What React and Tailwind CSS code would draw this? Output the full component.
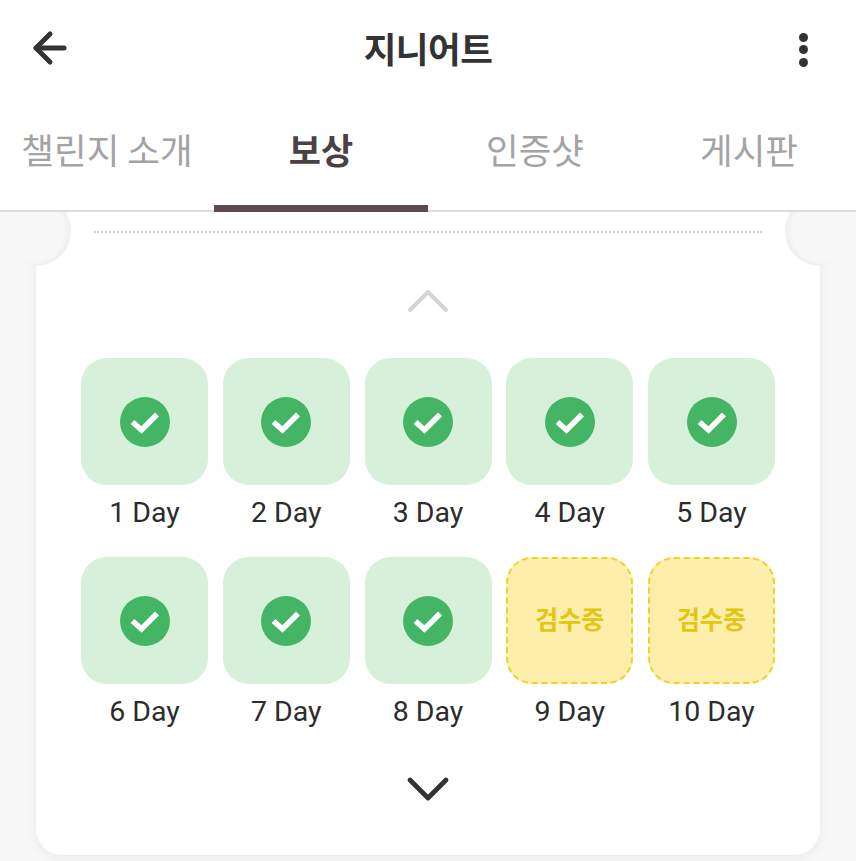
import React from 'react';
import { ArrowLeft, ChevronUp, ChevronDown } from 'lucide-react';

const KR = "font-['Noto_Sans_CJK_KR','Noto_Sans',sans-serif]";

const TABS = [
  { label: '챌린지 소개' },
  { label: '보상', active: true },
  { label: '인증샷' },
  { label: '게시판' },
];

const DAYS = [
  { day: 1, done: true },
  { day: 2, done: true },
  { day: 3, done: true },
  { day: 4, done: true },
  { day: 5, done: true },
  { day: 6, done: true },
  { day: 7, done: true },
  { day: 8, done: true },
  { day: 9, done: false },
  { day: 10, done: false },
];

const CheckBadge = () => (
  <svg width="50" height="50" viewBox="0 0 50 50">
    <circle cx="25" cy="25" r="25" fill="#43b565" />
    <path d="M12.5 25 L21.5 33 L37 17.5" fill="none" stroke="#fff" strokeWidth="5.5" />
  </svg>
);

const DayTile = ({ day, done }) => (
  <div className="flex flex-col items-center">
    {done ? (
      <div className="flex h-[127px] w-full items-center justify-center rounded-[26px] bg-[#d6f0d9]">
        <CheckBadge />
      </div>
    ) : (
      <div className="flex h-[127px] w-full items-center justify-center rounded-[26px] border-2 border-dashed border-[#e6d62c] bg-[#fdeeab] pb-[3px]">
        <span className={`${KR} text-[25px] font-bold text-[#e3c60f]`}>검수중</span>
      </div>
    )}
    <span className="mt-[10px] font-['Roboto',sans-serif] text-[28.5px] leading-[36px] text-[#2c2c2c]">
      {day} Day
    </span>
  </div>
);

export default function App() {
  return (
    <div className={`${KR} flex h-[861px] w-[856px] flex-col overflow-hidden bg-[#f7f7f7]`}>
      <header className="grid h-[96px] grid-cols-[1fr_auto_1fr] items-center bg-white px-[26px]">
        <ArrowLeft size={48} strokeWidth={2.5} color="#333" />
        <h1 className="text-[35.5px] font-bold tracking-[-0.5px] text-[#333]">지니어트</h1>
        <div className="flex flex-col items-end gap-[3.5px] pr-[22px] pt-[3px]">
          <span className="h-[9px] w-[9px] rounded-full bg-[#333]" />
          <span className="h-[9px] w-[9px] rounded-full bg-[#333]" />
          <span className="h-[9px] w-[9px] rounded-full bg-[#333]" />
        </div>
      </header>

      <nav className="relative z-10 grid h-[116px] grid-cols-4 border-b-2 border-[#dcdcdc] bg-white">
        {TABS.map((tab) => (
          <div
            key={tab.label}
            className={
              tab.active
                ? 'mb-[-2px] flex items-center justify-center border-b-[7px] border-[#5b4a50] pb-[2px] text-[35px] font-bold text-[#4a4145]'
                : 'flex items-center justify-center whitespace-nowrap pb-[8px] text-[35.5px] text-[#a3a3a3]'
            }
          >
            {tab.label}
          </div>
        ))}
      </nav>

      <main className="relative mx-[36px] flex h-[643px] flex-col rounded-b-[26px] bg-white px-[45px] shadow-[0_2px_12px_rgba(0,0,0,0.06)]">
        <span className="absolute left-[-35px] top-[-16px] h-[70px] w-[70px] rounded-full bg-[#f7f7f7] shadow-[inset_-4px_-1px_4px_rgba(0,0,0,0.035)]" />
        <span className="absolute right-[-35px] top-[-16px] h-[70px] w-[70px] rounded-full bg-[#f7f7f7] shadow-[inset_4px_-1px_4px_rgba(0,0,0,0.035)]" />
        <div className="mx-[13px] mt-[19px] border-t-2 border-dotted border-[#d0d0d0]" />
        <div className="mt-[50px] flex justify-center">
          <ChevronUp size={72} strokeWidth={1.4} color="#d4d4d4" className="my-[-18px]" />
        </div>
        <div className="mt-[39px] grid grid-cols-5 gap-x-[14.75px] gap-y-[26px]">
          {DAYS.map((d) => (
            <DayTile key={d.day} day={d.day} done={d.done} />
          ))}
        </div>
        <div className="mt-[41px] flex justify-center">
          <ChevronDown size={72} strokeWidth={1.6} color="#333" className="my-[-18px]" />
        </div>
      </main>
    </div>
  );
}
